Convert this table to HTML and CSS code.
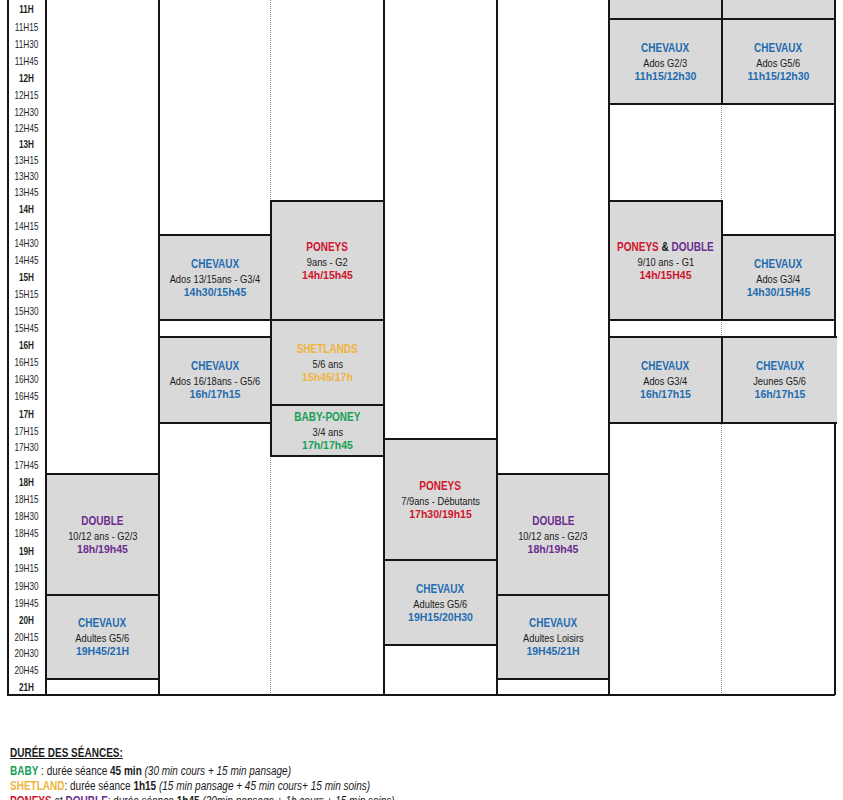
FILE: index.html
```html
<!DOCTYPE html>
<html lang="fr">
<head>
<meta charset="utf-8">
<title>Planning</title>
<link rel="stylesheet" href="styles.css">
</head>
<body>
<div class="sheet">
  <div class="table">
    <div class="times">
      <span class="t h">11H</span><span class="t">11H15</span><span class="t">11H30</span><span class="t">11H45</span>
      <span class="t h">12H</span><span class="t">12H15</span><span class="t">12H30</span><span class="t">12H45</span>
      <span class="t h">13H</span><span class="t">13H15</span><span class="t">13H30</span><span class="t">13H45</span>
      <span class="t h">14H</span><span class="t">14H15</span><span class="t">14H30</span><span class="t">14H45</span>
      <span class="t h">15H</span><span class="t">15H15</span><span class="t">15H30</span><span class="t">15H45</span>
      <span class="t h">16H</span><span class="t">16H15</span><span class="t">16H30</span><span class="t">16H45</span>
      <span class="t h">17H</span><span class="t">17H15</span><span class="t">17H30</span><span class="t">17H45</span>
      <span class="t h">18H</span><span class="t">18H15</span><span class="t">18H30</span><span class="t">18H45</span>
      <span class="t h">19H</span><span class="t">19H15</span><span class="t">19H30</span><span class="t">19H45</span>
      <span class="t h">20H</span><span class="t">20H15</span><span class="t">20H30</span><span class="t">20H45</span>
      <span class="t h">21H</span>
    </div>

    <div class="col c1 solid"></div>
    <div class="col c2 dotted"></div>
    <div class="col c3 solid"></div>
    <div class="col c4 solid"></div>
    <div class="col c5 solid"></div>
    <div class="col c6 dotted"></div>
    <div class="col c7"></div>

    <div class="ev cut s6"></div>
    <div class="ev cut s7"></div>

    <div class="ev e-s6-a"><b class="ti blue">CHEVAUX</b><span class="su">Ados G2/3</span><b class="hr blue">11h15/12h30</b></div>
    <div class="ev e-s7-a"><b class="ti blue">CHEVAUX</b><span class="su">Ados G5/6</span><b class="hr blue">11h15/12h30</b></div>

    <div class="ev e-c2-a"><b class="ti blue">CHEVAUX</b><span class="su">Ados 13/15ans - G3/4</span><b class="hr blue">14h30/15h45</b></div>
    <div class="ev e-c2-b"><b class="ti blue">CHEVAUX</b><span class="su">Ados 16/18ans - G5/6</span><b class="hr blue">16h/17h15</b></div>

    <div class="ev e-c3-a"><b class="ti red">PONEYS</b><span class="su">9ans - G2</span><b class="hr red">14h/15h45</b></div>
    <div class="ev e-c3-b"><b class="ti yellow">SHETLANDS</b><span class="su">5/6 ans</span><b class="hr yellow">15h45/17h</b></div>
    <div class="ev e-c3-c"><b class="ti green">BABY-PONEY</b><span class="su">3/4 ans</span><b class="hr green">17h/17h45</b></div>

    <div class="ev e-c1-a"><b class="ti purple">DOUBLE</b><span class="su">10/12 ans - G2/3</span><b class="hr purple">18h/19h45</b></div>
    <div class="ev e-c1-b"><b class="ti blue">CHEVAUX</b><span class="su">Adultes G5/6</span><b class="hr blue">19H45/21H</b></div>

    <div class="ev e-c4-a"><b class="ti red">PONEYS</b><span class="su">7/9ans - Débutants</span><b class="hr red">17h30/19h15</b></div>
    <div class="ev e-c4-b"><b class="ti blue">CHEVAUX</b><span class="su">Adultes G5/6</span><b class="hr blue">19H15/20H30</b></div>

    <div class="ev e-c5-a"><b class="ti purple">DOUBLE</b><span class="su">10/12 ans - G2/3</span><b class="hr purple">18h/19h45</b></div>
    <div class="ev e-c5-b"><b class="ti blue">CHEVAUX</b><span class="su">Adultes Loisirs</span><b class="hr blue">19H45/21H</b></div>

    <div class="ev e-s6-b"><b class="ti"><span class="red">PONEYS</span> &amp; <span class="purple">DOUBLE</span></b><span class="su">9/10 ans - G1</span><b class="hr red">14h/15H45</b></div>
    <div class="ev e-s6-c"><b class="ti blue">CHEVAUX</b><span class="su">Ados G3/4</span><b class="hr blue">16h/17h15</b></div>

    <div class="ev e-s7-b"><b class="ti blue">CHEVAUX</b><span class="su">Ados G3/4</span><b class="hr blue">14h30/15H45</b></div>
    <div class="ev e-s7-c open-right"><b class="ti blue">CHEVAUX</b><span class="su">Jeunes G5/6</span><b class="hr blue">16h/17h15</b></div>

    <div class="frame"></div>
  </div>

  <div class="legend">
    <p class="lh">DURÉE DES SÉANCES:</p>
    <p><b class="green">BABY</b> : durée séance <b>45 min</b> <i>(30 min cours + 15 min pansage)</i></p>
    <p><b class="yellow">SHETLAND</b>: durée séance <b>1h15</b> <i>(15 min pansage + 45 min cours+ 15 min soins)</i></p>
    <p><b class="red">PONEYS</b> et <b class="purple">DOUBLE</b>: durée séance <b>1h45</b> <i>(30min pansage + 1h cours + 15 min soins)</i></p>
  </div>
</div>
</body>
</html>
```

FILE: styles.css
```css
:root {
  --rows: 19px repeat(5, 17px) repeat(5, 16px) 17px repeat(12, 17px)
          18px 16px 17px 18px 17px 17px 17px 17px 18px 17px 18px 17px 17px 16px 17px 17px 16px;
  --ink: #151515;
  --sans: "Liberation Sans", Arial, sans-serif;
}

html, body {
  margin: 0;
  padding: 0;
  background: #fff;
}

body {
  font-family: var(--sans);
  color: var(--ink);
}

.sheet {
  padding-left: 7px;
  width: 836px;
}

.table {
  display: grid;
  grid-template-columns: 39px 113px 112px 113px 113px 112px 113px 113px;
  grid-template-rows: var(--rows);
  width: 828px;
}

.times {
  grid-column: 1;
  grid-row: 1 / -1;
  display: grid;
  grid-template-rows: var(--rows);
  box-shadow: 1px 0 0 var(--ink), inset -1px 0 0 var(--ink);
}

.t {
  display: flex;
  align-items: center;
  justify-content: center;
  font-size: 10.5px;
  line-height: 1;
  color: #1e1e1e;
  transform: scaleX(0.78);
}

.t.h {
  font-weight: bold;
}

.col {
  grid-row: 1 / -1;
}
.c1 { grid-column: 2; }
.c2 { grid-column: 3; }
.c3 { grid-column: 4; }
.c4 { grid-column: 5; }
.c5 { grid-column: 6; }
.c6 { grid-column: 7; }
.c7 { grid-column: 8; }

.col.solid {
  box-shadow: 1px 0 0 var(--ink), inset -1px 0 0 var(--ink);
}
.col.dotted {
  border-right: 1px dotted #8a8a8a;
}

.ev {
  box-sizing: border-box;
  background: #d9d9d9;
  border: 1px solid var(--ink);
  box-shadow: 0 0 0 1px var(--ink);
  display: flex;
  flex-direction: column;
  align-items: center;
  justify-content: center;
  text-align: center;
  white-space: nowrap;
}

.ev.open-right {
  position: relative;
  z-index: 1;
  margin-right: -2px;
  border-right: 0;
  box-shadow: 0 -1px 0 var(--ink), 0 1px 0 var(--ink), -1px 0 0 var(--ink);
}

.cut { margin-top: -4px; grid-row: 1 / 2; }
.s6 { grid-column: 7; }
.s7 { grid-column: 8; }

.ti {
  display: inline-block;
  font-weight: bold;
  font-size: 12.5px;
  line-height: 15px;
  color: var(--ink);
  transform: scaleX(0.8);
}
.su {
  display: inline-block;
  font-size: 11.5px;
  line-height: 14px;
  color: #1a1a1a;
  transform: scaleX(0.81);
}
.hr {
  display: inline-block;
  font-weight: bold;
  font-size: 10.5px;
  line-height: 13px;
}

.blue { color: #1f6cb0; }
.red { color: #d0142c; }
.purple { color: #6b2d8e; }
.yellow { color: #f0b43c; }
.green { color: #16a055; }

.e-s6-a { grid-area: 2 / 7 / 7 / 8; }
.e-s7-a { grid-area: 2 / 8 / 7 / 9; }
.e-c2-a { grid-area: 15 / 3 / 20 / 4; }
.e-c2-b { grid-area: 21 / 3 / 26 / 4; }
.e-c3-a { grid-area: 13 / 4 / 20 / 5; }
.e-c3-b { grid-area: 20 / 4 / 25 / 5; }
.e-c3-c { grid-area: 25 / 4 / 28 / 5; }
.e-c1-a { grid-area: 29 / 2 / 36 / 3; }
.e-c1-b { grid-area: 36 / 2 / 41 / 3; }
.e-c4-a { grid-area: 27 / 5 / 34 / 6; }
.e-c4-b { grid-area: 34 / 5 / 39 / 6; }
.e-c5-a { grid-area: 29 / 6 / 36 / 7; }
.e-c5-b { grid-area: 36 / 6 / 41 / 7; }
.e-s6-b { grid-area: 13 / 7 / 20 / 8; }
.e-s6-c { grid-area: 21 / 7 / 26 / 8; }
.e-s7-b { grid-area: 15 / 8 / 20 / 9; }
.e-s7-c { grid-area: 21 / 8 / 26 / 9; }

.frame {
  grid-column: 1 / -1;
  grid-row: 1 / -1;
  box-shadow: inset 2px 0 0 var(--ink), inset -1px 0 0 var(--ink), 1px 0 0 var(--ink),
              inset 0 -1px 0 var(--ink), 0 1px 0 var(--ink);
  pointer-events: none;
}

.legend {
  margin-top: 51px;
  padding-left: 3px;
  font-size: 12.5px;
  line-height: 15px;
  color: #1a1a1a;
}

.legend p {
  margin: 0;
  white-space: nowrap;
  transform: scaleX(0.8);
  transform-origin: 0 50%;
}

.legend .lh {
  font-weight: bold;
  text-decoration: underline;
  margin-bottom: 3px;
}
```
